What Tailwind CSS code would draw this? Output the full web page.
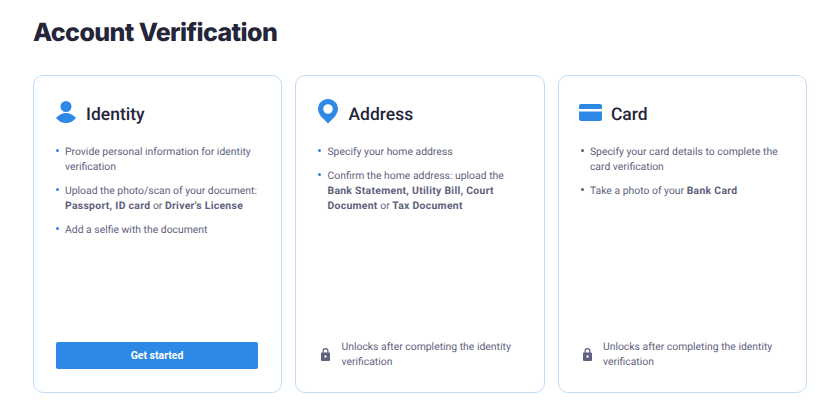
<!DOCTYPE html>
<html lang="en">
<head>
    <meta charset="UTF-8">
    <title>Account Verification</title>
    <script src="https://cdn.jsdelivr.net/npm/@tailwindcss/browser@4"></script>
</head>
<body class="bg-white h-[418px] overflow-hidden font-['Roboto',sans-serif] [text-rendering:geometricPrecision]">
    <div class="pl-[33px] pt-[17px] w-[807px]">
        <h1 class="font-['Inter',sans-serif] font-extrabold text-[25px] tracking-[-0.6px] leading-[32px] text-[#25253a] mb-[26px]">Account Verification</h1>

        <div class="grid grid-cols-3 gap-[13.4px] h-[318px]">

            <!-- Identity -->
            <div class="flex flex-col border border-[#bfdcf7] rounded-[10px] pt-[23px] pl-[22px] pr-[23px] pb-[23px]">
                <div class="flex items-center h-[30px] mb-[15px]">
                    <svg class="w-[20px] h-[22px] mr-[10px] mb-[4px]" viewBox="0 0 20 22" fill="#2e88e5">
                        <circle cx="10" cy="5.500" r="5.500"/>
                        <path d="M0 17C2.500 14 6 12 10 12s7.500 2 10 5c-2.500 3-6 5-10 5s-7.500-2-10-5z"/>
                    </svg>
                    <h2 class="text-[17.5px] font-medium mt-[2px] text-[#25253a]">Identity</h2>
                </div>
                <ul class="flex flex-col gap-[9px] text-[10.4px] leading-[15px] text-[#5f5f7e]">
                    <li class="flex"><span class="w-[3px] h-[3px] mt-[5px] mr-[6px] shrink-0 rounded-full bg-[#2e88e5]"></span><span>Provide personal information for identity verification</span></li>
                    <li class="flex"><span class="w-[3px] h-[3px] mt-[5px] mr-[6px] shrink-0 rounded-full bg-[#2e88e5]"></span><span>Upload the photo/scan of your document: <b class="font-bold tracking-[0.3px]">Passport, ID card</b> or <b class="font-bold tracking-[0.3px]">Driver's License</b></span></li>
                    <li class="flex"><span class="w-[3px] h-[3px] mt-[5px] mr-[6px] shrink-0 rounded-full bg-[#2e88e5]"></span><span>Add a selfie with the document</span></li>
                </ul>
                <button class="mt-auto h-[27px] rounded-[2px] bg-[#2e88e5] text-white text-[10.5px] font-bold">Get started</button>
            </div>

            <!-- Address -->
            <div class="flex flex-col border border-[#bfdcf7] rounded-[10px] pt-[23px] pl-[22px] pr-[23px] pb-[23px]">
                <div class="flex items-center h-[30px] mb-[15px]">
                    <svg class="w-[20px] h-[25px] mr-[10px] mb-[5px]" viewBox="0 0 20 25" fill="#2e88e5">
                        <path fill-rule="evenodd" d="M10 0c5.500 0 10 4.400 10 9.900 0 3.900-2.600 7.200-5 9.700l-5 5-5-5c-2.400-2.500-5-5.800-5-9.700C0 4.400 4.500 0 10 0zm0 5.200a4.800 4.800 0 1 0 0 9.600 4.800 4.800 0 0 0 0-9.600z"/>
                    </svg>
                    <h2 class="text-[17.5px] font-medium mt-[2px] text-[#25253a]">Address</h2>
                </div>
                <ul class="flex flex-col gap-[9px] text-[10.4px] leading-[15px] text-[#5f5f7e]">
                    <li class="flex"><span class="w-[3px] h-[3px] mt-[5px] mr-[6px] shrink-0 rounded-full bg-[#2e88e5]"></span><span>Specify your home address</span></li>
                    <li class="flex"><span class="w-[3px] h-[3px] mt-[5px] mr-[6px] shrink-0 rounded-full bg-[#2e88e5]"></span><span>Confirm the home address: upload the <b class="font-bold tracking-[0.3px]">Bank Statement, Utility Bill, Court Document</b> or <b class="font-bold tracking-[0.3px]">Tax Document</b></span></li>
                </ul>
                <div class="mt-auto flex items-center">
                    <svg class="w-[9px] h-[13px] mr-[11px] ml-[3px] shrink-0" viewBox="0 0 9 13" fill="#5f5f7e">
                        <path fill-rule="evenodd" d="M1.500 4.500V3a3 3 0 0 1 6 0v1.500h.5a1 1 0 0 1 1 1V12a1 1 0 0 1-1 1H1a1 1 0 0 1-1-1V5.500a1 1 0 0 1 1-1h.5zm1.200 0h3.600V3a1.800 1.800 0 0 0-3.600 0v1.500zM4.500 7.300a1.200 1.200 0 1 0 0 2.400 1.200 1.200 0 0 0 0-2.400z"/>
                    </svg>
                    <p class="text-[10.4px] leading-[15px] text-[#5f5f7e]">Unlocks after completing the identity verification</p>
                </div>
            </div>

            <!-- Card -->
            <div class="flex flex-col border border-[#bfdcf7] rounded-[10px] pt-[23px] pl-[20px] pr-[23px] pb-[23px]">
                <div class="flex items-center h-[30px] mb-[15px]">
                    <svg class="w-[23px] h-[17px] mr-[9px] mb-[3px]" viewBox="0 0 23 17" fill="#2e88e5">
                        <path d="M2 0h19a2 2 0 0 1 2 2v3H0V2a2 2 0 0 1 2-2z"/>
                        <path d="M0 7.500h23V15a2 2 0 0 1-2 2H2a2 2 0 0 1-2-2V7.500z"/>
                    </svg>
                    <h2 class="text-[17.5px] font-medium mt-[2px] text-[#25253a]">Card</h2>
                </div>
                <ul class="flex flex-col gap-[9px] ml-[2px] text-[10.4px] leading-[15px] text-[#5f5f7e]">
                    <li class="flex"><span class="w-[3px] h-[3px] mt-[5px] mr-[6px] shrink-0 rounded-full bg-[#5f5f7e]"></span><span>Specify your card details to complete the card verification</span></li>
                    <li class="flex"><span class="w-[3px] h-[3px] mt-[5px] mr-[6px] shrink-0 rounded-full bg-[#5f5f7e]"></span><span>Take a photo of your <b class="font-bold tracking-[0.3px]">Bank Card</b></span></li>
                </ul>
                <div class="mt-auto flex items-center">
                    <svg class="w-[9px] h-[13px] mr-[11px] ml-[4px] shrink-0" viewBox="0 0 9 13" fill="#5f5f7e">
                        <path fill-rule="evenodd" d="M1.500 4.500V3a3 3 0 0 1 6 0v1.500h.5a1 1 0 0 1 1 1V12a1 1 0 0 1-1 1H1a1 1 0 0 1-1-1V5.500a1 1 0 0 1 1-1h.5zm1.200 0h3.600V3a1.800 1.800 0 0 0-3.600 0v1.500zM4.500 7.300a1.200 1.200 0 1 0 0 2.400 1.200 1.200 0 0 0 0-2.400z"/>
                    </svg>
                    <p class="text-[10.4px] leading-[15px] text-[#5f5f7e]">Unlocks after completing the identity verification</p>
                </div>
            </div>

        </div>
    </div>
</body>
</html>
